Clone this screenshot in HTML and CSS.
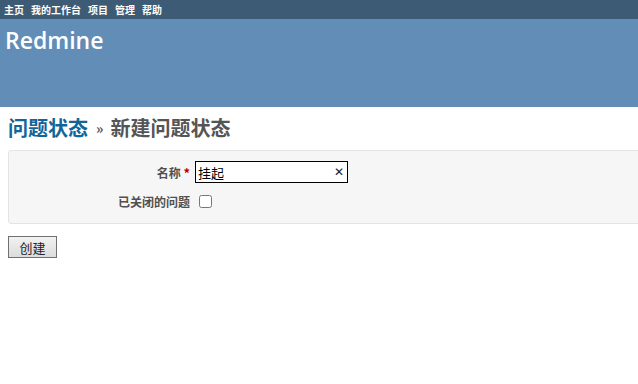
FILE: index.html
```html
<!DOCTYPE html>
<html lang="zh-CN">
<head>
  <meta charset="UTF-8" />
  <title>新建问题状态 - Redmine</title>
  <link rel="stylesheet" href="styles.css">
</head>
<body>
  <div id="top-menu">
    <a href="#">主页</a>
    <a href="#">我的工作台</a>
    <a href="#">项目</a>
    <a href="#">管理</a>
    <a href="#">帮助</a>
  </div>
  <div id="header">
    <h1>Redmine</h1>
  </div>
  <div id="content">
    <h2><a href="#">问题状态</a><span class="sep">&#187;</span>新建问题状态</h2>
    <form class="new-status">
      <div class="box tabular">
        <p>
          <label for="status_name">名称 <span class="required">*</span></label>
          <span class="field-wrap">
            <input id="status_name" type="text" value="挂起" />
            <span class="clear">&#x2715;</span>
          </span>
        </p>
        <p>
          <label for="status_closed">已关闭的问题</label>
          <input id="status_closed" type="checkbox" />
        </p>
      </div>
      <button type="submit" class="btn">创建</button>
    </form>
  </div>
</body>
</html>
```

FILE: styles.css
```css
* {
  box-sizing: border-box;
}
body {
  margin: 0;
  font-family: "Noto Sans CJK SC", "DejaVu Sans", sans-serif;
  font-size: 12px;
  color: #333;
  background: #fff;
  overflow: hidden;
}
#top-menu {
  background: #3e5b76;
  height: 19px;
  padding-left: 4px;
  display: flex;
  gap: 7px;
  align-items: center;
}
#top-menu a {
  color: #fff;
  font-size: 10px;
  font-weight: 700;
  text-decoration: none;
  line-height: 16px;
}
#header {
  background: #628db6;
  height: 88px;
  padding: 6px 5px;
}
#header h1 {
  margin: 0;
  color: #fff;
  font-family: "Open Sans", "Noto Sans CJK SC", sans-serif;
  font-weight: 600;
  font-size: 23px;
  line-height: 30px;
}
#content {
  padding: 9px 0 0 8px;
}
h2 {
  margin: 0 0 10px;
  height: 24px;
  font-size: 20px;
  line-height: 24px;
  font-weight: 700;
  color: #555;
  display: flex;
  align-items: center;
}
h2 a {
  color: #169;
  text-decoration: none;
}
h2 .sep {
  font-size: 14px;
  line-height: 1;
  margin: 0 7px 0 8px;
}
.box {
  background: #f6f6f6;
  border: 1px solid #e4e4e4;
  border-radius: 3px;
  margin-right: -20px;
  padding: 10px 0 11px;
  display: flex;
  flex-direction: column;
  gap: 7px;
}
.tabular p {
  margin: 0;
  display: flex;
  align-items: center;
  height: 22px;
}
.tabular label {
  width: 181px;
  margin-right: 5px;
  text-align: right;
  font-weight: 700;
  color: #505050;
}
.required {
  color: #bb0000;
  font-size: 13px;
}
.field-wrap {
  position: relative;
  display: inline-block;
}
.field-wrap input {
  width: 153px;
  height: 22px;
  border: 1px solid #000;
  border-radius: 0;
  padding: 0 16px 0 2px;
  font-family: inherit;
  font-size: 13px;
  color: #000;
  background: #fff;
  outline: none;
}
.clear {
  position: absolute;
  right: 4px;
  top: 2px;
  font-size: 12px;
  line-height: 18px;
  color: #222;
  font-family: "DejaVu Sans", sans-serif;
}
.tabular input[type="checkbox"] {
  margin: 0 0 0 4px;
  width: 13px;
  height: 13px;
}
.btn {
  margin-top: 12px;
  width: 49px;
  height: 22px;
  padding: 0;
  font-family: inherit;
  font-size: 13px;
  color: #222;
  border: 1px solid #707070;
  border-radius: 0;
  background: linear-gradient(#f2f2f2, #dcdcdc);
}
```
